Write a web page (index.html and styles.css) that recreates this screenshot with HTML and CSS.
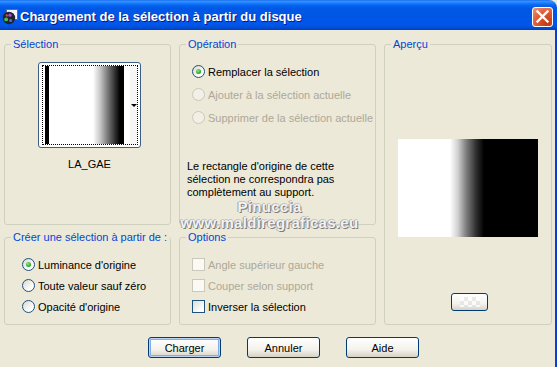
FILE: index.html
```html
<!DOCTYPE html>
<html lang="fr">
<head>
    <meta charset="UTF-8">
    <title>Chargement de la sélection à partir du disque</title>
    <link rel="stylesheet" href="styles.css">
</head>
<body>
    <div class="window">
        <div class="titlebar">
            <svg class="app-icon" width="16" height="16" viewBox="0 0 16 16">
                <rect x="4.5" y="0.5" width="11" height="10" fill="#f4f6fb" stroke="#5b6d92"/>
                <circle cx="7" cy="9" r="6.2" fill="#23232e"/>
                <circle cx="4.2" cy="10.4" r="1.9" fill="#3cc64a"/>
                <circle cx="8" cy="6.2" r="1.6" fill="#b24ad6"/>
                <circle cx="8.6" cy="11.6" r="1.5" fill="#3f74f2"/>
                <circle cx="4.8" cy="6.4" r="1.2" fill="#d9483f"/>
            </svg>
            <span class="title">Chargement de la sélection à partir du disque</span>
            <button class="close" title="Fermer">
                <svg width="19" height="18" viewBox="0 0 19 18">
                    <path d="M4.5 3.5 L14.5 13.5 M14.5 3.5 L4.5 13.5" stroke="#fff" stroke-width="2.4" stroke-linecap="square"/>
                </svg>
            </button>
        </div>

        <div class="content">
            <div class="groups">
                <fieldset class="group group-selection">
                    <legend>Sélection</legend>
                    <div class="selection-item">
                        <div class="thumb">
                            <div class="thumb-focus">
                                <div class="thumb-img"></div>
                                <div class="thumb-drop"><span class="arrow"></span></div>
                            </div>
                        </div>
                        <div class="thumb-name">LA_GAE</div>
                    </div>
                </fieldset>

                <fieldset class="group group-operation">
                    <legend>Opération</legend>
                    <div class="option-list op-list">
                        <label class="option"><span class="radio checked"></span>Remplacer la sélection</label>
                        <label class="option disabled"><span class="radio"></span>Ajouter à la sélection actuelle</label>
                        <label class="option disabled"><span class="radio"></span>Supprimer de la sélection actuelle</label>
                    </div>
                    <p class="op-note">Le rectangle d'origine de cette sélection ne correspondra pas complètement au support.</p>
                </fieldset>

                <fieldset class="group group-preview">
                    <legend>Aperçu</legend>
                    <div class="preview-img"></div>
                    <button class="btn swatch-btn"><span class="checker"></span></button>
                </fieldset>

                <fieldset class="group group-source">
                    <legend>Créer une sélection à partir de :</legend>
                    <div class="option-list source-list">
                        <label class="option"><span class="radio checked"></span>Luminance d'origine</label>
                        <label class="option"><span class="radio"></span>Toute valeur sauf zéro</label>
                        <label class="option"><span class="radio"></span>Opacité d'origine</label>
                    </div>
                </fieldset>

                <fieldset class="group group-options">
                    <legend>Options</legend>
                    <div class="option-list options-list">
                        <label class="option disabled"><span class="check"></span>Angle supérieur gauche</label>
                        <label class="option disabled"><span class="check"></span>Couper selon support</label>
                        <label class="option"><span class="check"></span>Inverser la sélection</label>
                    </div>
                </fieldset>
            </div>

            <div class="buttons">
                <button class="btn default">Charger</button>
                <button class="btn">Annuler</button>
                <button class="btn">Aide</button>
            </div>
        </div>

        <!-- watermark printed over the dialog in the original capture -->
        <div class="watermark">
            <div>Pinuccia</div>
            <div>www.maldiregraficas.eu</div>
        </div>
    </div>
</body>
</html>
```

FILE: styles.css
```css
body {
    margin: 0;
    font-family: "Liberation Sans", Arial, sans-serif;
    font-size: 11px;
    color: #000;
    background-color: #ECE9D8;
}
.window {
    position: relative;
    width: 557px;
    height: 367px;
    overflow: hidden;
    background-color: #ECE9D8;
}

/* title bar */
.titlebar {
    box-sizing: border-box;
    height: 30px;
    padding: 3px 4px 0 2px;
    display: flex;
    align-items: center;
    border-top-right-radius: 8px;
    background: linear-gradient(to bottom, #0a5fe6 0px, #3d95ff 1px, #1a80fd 3px, #0666f2 5px, #0058e6 8px, #0055e5 18px, #0057ec 24px, #0051dd 27px, #003fc0 30px);
}
.app-icon {
    flex: none;
    margin-right: 2px;
}
.title {
    color: #fff;
    font-weight: bold;
    font-size: 13px;
    white-space: nowrap;
    text-shadow: 1px 1px #0a1883;
}
.close {
    margin-left: auto;
    width: 21px;
    height: 20px;
    padding: 0;
    border: 1px solid #fff;
    border-radius: 3px;
    display: flex;
    align-items: center;
    justify-content: center;
    background: radial-gradient(circle at 75% 85%, #c23812, #e05a34 55%, #ee9a7f);
}

/* dialog body */
.content {
    box-sizing: border-box;
    height: 337px;
    padding: 8px 3px 0 4px;
    border-right: 2px solid #0b3cd9;
}
.groups {
    display: grid;
    grid-template-columns: 167px 197px 168px;
    grid-template-rows: 187px 94px;
    gap: 6px 8px;
}
.group {
    box-sizing: border-box;
    margin: 0;
    padding: 0;
    min-width: 0;
    border: 1px solid #D0D0BF;
    border-radius: 3px;
}
.group legend {
    margin-left: 6px;
    padding: 0 2px;
    line-height: 13px;
    color: #0046D5;
}
.group-preview {
    grid-column: 3;
    grid-row: 1 / span 2;
    display: flex;
    flex-direction: column;
    align-items: center;
}

/* selection thumbnail */
.selection-item {
    width: 103px;
    margin: 11px 0 0 33px;
}
.thumb {
    box-sizing: border-box;
    height: 86px;
    padding: 2px 2px 2px 3px;
    border: 1px solid #3b5f88;
    border-radius: 3px;
    background-color: #fff;
}
.thumb-focus {
    box-sizing: border-box;
    height: 80px;
    border: 1px dotted #000;
    padding-left: 2px;
    display: flex;
}
.thumb-img {
    width: 85px;
    background: linear-gradient(to right, #000 0, #000 4px, #fff 4px, #fff 48px, #c8c8c8 55px, #808080 62px, #303030 70px, #000 75px, #000 79px, #fff 79px);
}
.thumb-drop {
    flex: 1;
    background-color: #f6f6f4;
    display: flex;
    align-items: center;
    justify-content: flex-end;
}
.arrow {
    width: 0;
    height: 0;
    border-top: 3px solid #000;
    border-left: 3px solid transparent;
    border-right: 3px solid transparent;
}
.thumb-name {
    margin-top: 10px;
    line-height: 13px;
    text-align: center;
}

/* radio / check lists */
.option-list {
    display: flex;
    flex-direction: column;
}
.option {
    display: flex;
    align-items: center;
    gap: 3px;
    white-space: nowrap;
}
.option.disabled {
    color: #ACA899;
}
.op-list {
    padding: 9px 0 0 12px;
}
.op-list .option {
    height: 23px;
}
.source-list {
    padding: 10px 0 0 17px;
}
.options-list {
    padding: 10px 0 0 12px;
}
.source-list .option,
.options-list .option {
    height: 21px;
}
.radio {
    box-sizing: border-box;
    flex: none;
    width: 13px;
    height: 13px;
    border-radius: 50%;
    border: 1px solid #1C5180;
    background: linear-gradient(135deg, #DCD7CB, #fff 75%);
    display: flex;
    align-items: center;
    justify-content: center;
}
.radio.checked::after {
    content: "";
    width: 5px;
    height: 5px;
    border-radius: 50%;
    background: radial-gradient(circle at 40% 35%, #8fe98b, #21A121 70%);
}
.disabled .radio {
    border-color: #CAC8BB;
    background: #F2F0E6;
}
.check {
    box-sizing: border-box;
    flex: none;
    width: 13px;
    height: 13px;
    border: 1px solid #1C5180;
    background: linear-gradient(135deg, #DCDCD7, #fff 80%);
}
.disabled .check {
    border-color: #CAC8BB;
    background: #FAF9F4;
}
.op-note {
    width: 160px;
    margin: 31px 0 0 7px;
    line-height: 13px;
}

/* preview */
.preview-img {
    width: 140px;
    height: 98px;
    margin-top: 88px;
    background: linear-gradient(to right, #fff 52px, #d0d0d0 60px, #808080 68px, #303030 78px, #000 86px);
}

/* push buttons */
.btn {
    box-sizing: border-box;
    width: 73px;
    height: 21px;
    padding: 0;
    border: 1px solid #003C74;
    border-radius: 3px;
    font-family: "Liberation Sans", Arial, sans-serif;
    font-size: 11px;
    color: #000;
    background: linear-gradient(to bottom, #fff, #F3F2EC 60%, #D8D2C6);
}
.btn.default {
    box-shadow: inset 0 0 0 1px #bcd3f5, inset 0 0 0 2px #86abe6;
}
.swatch-btn {
    width: 37px;
    height: 18px;
    margin-top: 56px;
    margin-left: 3px;
    display: flex;
    align-items: center;
    justify-content: center;
}
.checker {
    width: 20px;
    height: 10px;
    opacity: 0.7;
    background: conic-gradient(#e2e2e2 25%, #fff 0 50%, #e2e2e2 0 75%, #fff 0) 0 0 / 8px 8px;
}
.buttons {
    display: flex;
    justify-content: center;
    gap: 26px;
    margin-top: 12px;
    padding-left: 11px;
}

/* watermark */
.watermark {
    position: absolute;
    left: 178px;
    top: 199px;
    width: 183px;
    text-align: center;
    font-weight: bold;
    font-size: 15px;
    line-height: 16px;
    letter-spacing: 0.3px;
    color: #f2f2f2;
    text-shadow: 1px 1px 0 #7d7d7d, -1px 0 0 #a0a0a0, 0 -1px 0 #c4c4c4;
    pointer-events: none;
}
```
